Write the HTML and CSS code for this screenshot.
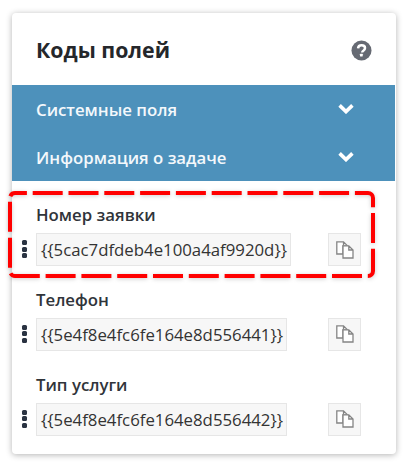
FILE: index.html
```html
<!DOCTYPE html>
<html lang="ru">
<head>
<meta charset="utf-8">
<title>Коды полей</title>
<link rel="stylesheet" href="styles.css">
</head>
<body>
<main class="card">
  <header class="head">
    <h1 class="title">Коды полей</h1>
    <svg class="help" viewBox="0 0 22 22" aria-hidden="true"><circle cx="11" cy="11" r="10.5" fill="#666a73"/><path d="M7.4 8.8c.1-2.2 1.6-3.4 3.7-3.4 2.1 0 3.6 1.2 3.6 3 0 1.4-.8 2.1-1.8 2.8-.9.6-1.1 1-1.1 1.7v.2" fill="none" stroke="#fff" stroke-width="2.6"/><rect x="9.4" y="14.4" width="2.9" height="2.8" rx=".4" fill="#fff"/></svg>
  </header>
  <section class="groups">
    <div class="group"><span>Системные поля</span><svg class="chev" viewBox="0 0 16 11" aria-hidden="true"><path d="M1.6 2.4l6.4 6.2 6.4-6.2" fill="none" stroke="#fff" stroke-width="3.6"/></svg></div>
    <div class="group"><span>Информация о задаче</span><svg class="chev" viewBox="0 0 16 11" aria-hidden="true"><path d="M1.6 2.4l6.4 6.2 6.4-6.2" fill="none" stroke="#fff" stroke-width="3.6"/></svg></div>
  </section>
  <section class="fields">
    <div class="field">
      <div class="label">Номер заявки</div>
      <div class="row">
        <span class="grip"><i></i><i></i><i></i></span>
        <span class="code">{{5cac7dfdeb4e100a4af9920d}}</span>
        <button class="copy" type="button"><svg viewBox="0 0 18 18" aria-hidden="true"><path d="M7 13H.8V.8H7.5L11.5 4.8H7ZM7.5 .8V4.8H11.5" fill="#fff" stroke="#858585" stroke-width="1.3"/><path d="M7 4.8H12.8L17 9V17H7ZM12.8 4.8V9H17" fill="#fff" stroke="#858585" stroke-width="1.3"/></svg></button>
      </div>
    </div>
    <div class="field">
      <div class="label">Телефон</div>
      <div class="row">
        <span class="grip"><i></i><i></i><i></i></span>
        <span class="code">{{5e4f8e4fc6fe164e8d556441}}</span>
        <button class="copy" type="button"><svg viewBox="0 0 18 18" aria-hidden="true"><path d="M7 13H.8V.8H7.5L11.5 4.8H7ZM7.5 .8V4.8H11.5" fill="#fff" stroke="#858585" stroke-width="1.3"/><path d="M7 4.8H12.8L17 9V17H7ZM12.8 4.8V9H17" fill="#fff" stroke="#858585" stroke-width="1.3"/></svg></button>
      </div>
    </div>
    <div class="field">
      <div class="label">Тип услуги</div>
      <div class="row">
        <span class="grip"><i></i><i></i><i></i></span>
        <span class="code">{{5e4f8e4fc6fe164e8d556442}}</span>
        <button class="copy" type="button"><svg viewBox="0 0 18 18" aria-hidden="true"><path d="M7 13H.8V.8H7.5L11.5 4.8H7ZM7.5 .8V4.8H11.5" fill="#fff" stroke="#858585" stroke-width="1.3"/><path d="M7 4.8H12.8L17 9V17H7ZM12.8 4.8V9H17" fill="#fff" stroke="#858585" stroke-width="1.3"/></svg></button>
      </div>
    </div>
  </section>
</main>
<svg class="mark" width="367" height="87" viewBox="0 0 367 87" aria-hidden="true"><rect x="2" y="2" width="363" height="83" rx="5" fill="none" stroke="#f00" stroke-width="4" stroke-dasharray="30 5.8" stroke-dashoffset="-17.7"/></svg>
</body>
</html>
```
FILE: styles.css
```css
* { box-sizing: border-box; }
html, body { margin: 0; padding: 0; }
body {
  position: relative;
  width: 407px;
  height: 468px;
  background: #fff;
  font-family: "Open Sans", sans-serif;
  color: #2b2e33;
  padding: 13px 11px 0 12px;
  overflow: hidden;
}
.card {
  height: 441px;
  background: #fff;
  border-radius: 4px;
  box-shadow: 0 1px 6px rgba(0, 0, 0, .3);
  overflow: hidden;
}
.head {
  height: 72px;
  display: flex;
  align-items: center;
  justify-content: space-between;
  padding: 0 24px 0 24px;
}
.title { margin: 0; font-size: 21.3px; font-weight: 700; line-height: 27px; color: #25272b; }
.help { width: 21px; height: 21px; display: block; margin-top: 2px; }
.groups { background: #4d91bb; margin-right: 1px; }
.group {
  height: 48px;
  display: flex;
  align-items: center;
  justify-content: space-between;
  padding: 0 41px 0 24px;
  font-size: 16.8px;
  font-weight: 600;
  color: #f4f8fb;
}
.chev { width: 16px; height: 11px; display: block; margin-top: -1px; }
.fields { padding-top: 24px; display: flex; flex-direction: column; gap: 23.8px; }
.label { margin-left: 24px; font-size: 16.8px; font-weight: 600; line-height: 20px; height: 20px; color: #30343a; }
.row { display: flex; align-items: center; position: relative; margin-top: 8px; height: 33px; }
.grip { width: 5px; margin-left: 10px; margin-right: 9px; display: flex; flex-direction: column; gap: 1.5px; margin-top: -1px; }
.grip i { display: block; width: 5px; height: 5px; border-radius: 1.5px; background: #2a3342; }
.code {
  height: 33px;
  padding: 0 3px 0 4px;
  background: #f7f7f7;
  border: 1px solid #e6e6e6;
  font-size: 16.8px;
  line-height: 31px;
  color: #333;
  white-space: nowrap;
}
.copy {
  position: absolute;
  left: 316px;
  top: 0;
  width: 33px;
  height: 33px;
  padding: 0;
  display: flex;
  align-items: center;
  justify-content: center;
  background: #f7f7f7;
  border: 1px solid #e6e6e6;
}
.copy svg { width: 18px; height: 18px; display: block; }
.mark { position: absolute; left: 7.5px; top: 191px; filter: drop-shadow(0 1px 2px rgba(0,0,0,.2)); }
```
